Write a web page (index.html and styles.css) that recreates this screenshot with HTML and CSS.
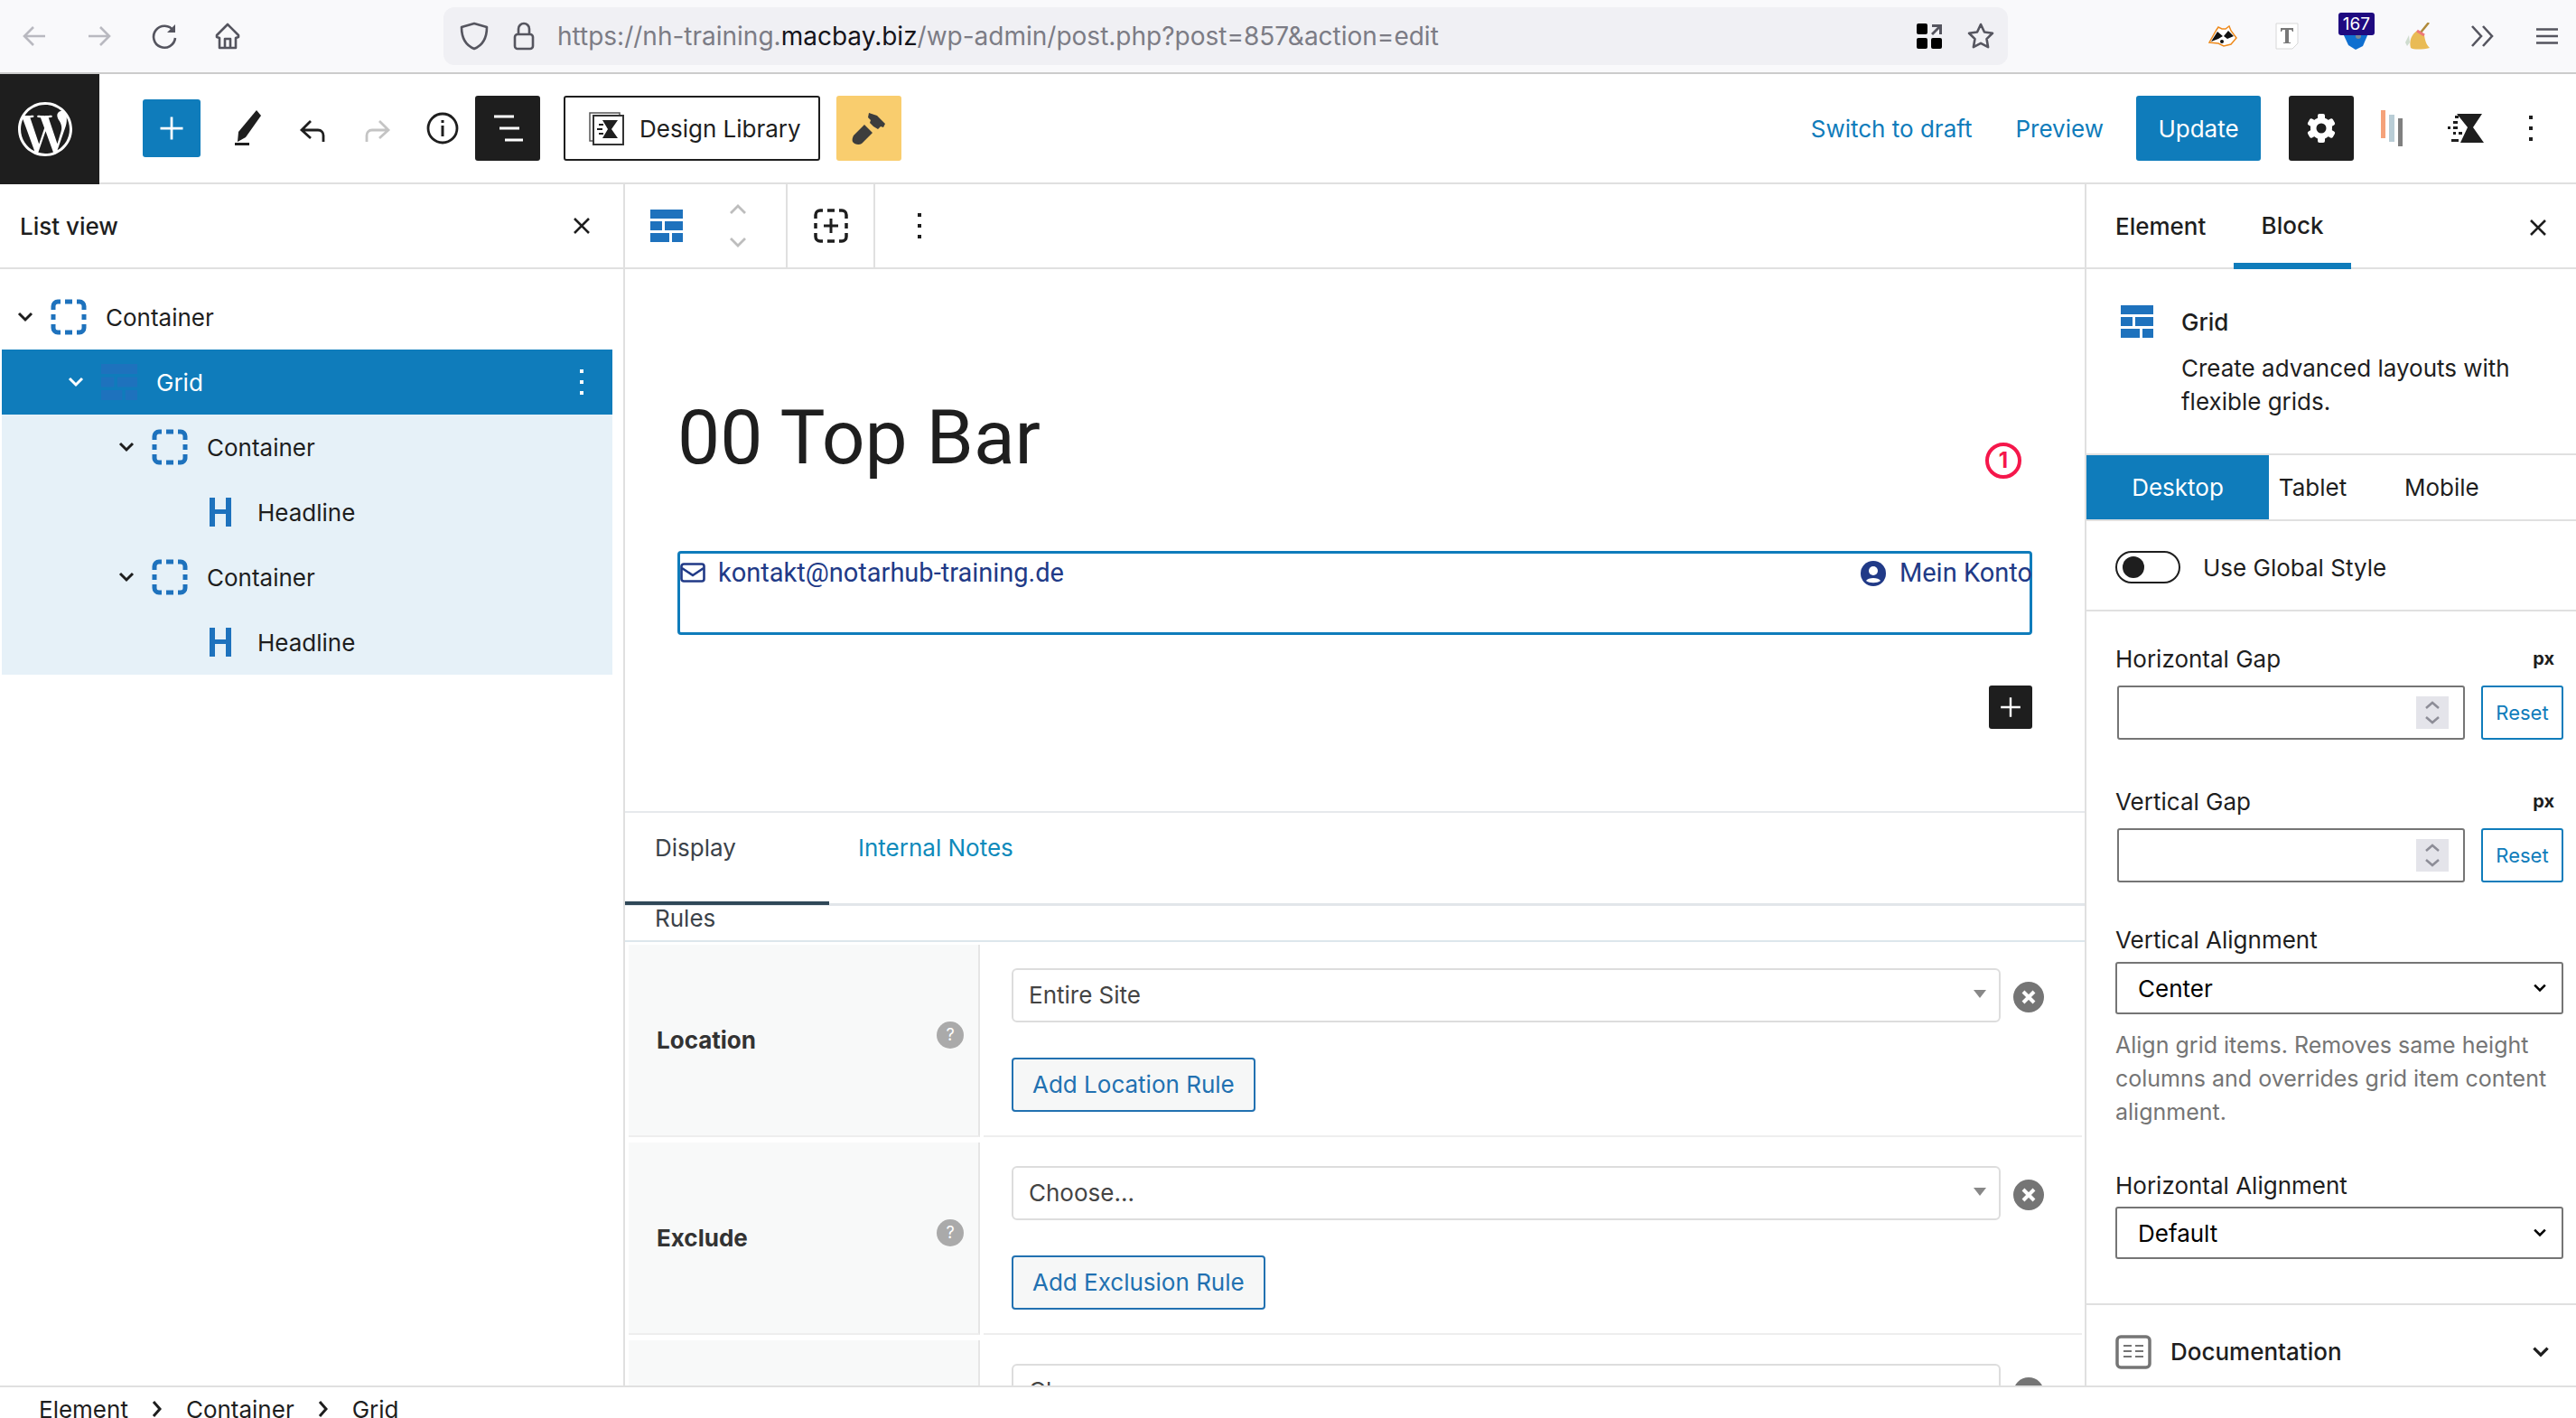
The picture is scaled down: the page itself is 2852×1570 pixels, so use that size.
FILE: index.html
```html
<!DOCTYPE html>
<html>
<head>
<meta charset="utf-8">
<title>00 Top Bar - Edit Element</title>
<link rel="stylesheet" href="styles.css">
</head>
<body>
<svg class="defs" width="0" height="0">
    <symbol id="i-dashed" viewBox="0 0 40 40"><path d="M3 12V8a5 5 0 0 1 5-5h3M29 3h3a5 5 0 0 1 5 5v4M37 28v4a5 5 0 0 1-5 5h-3M11 37H8a5 5 0 0 1-5-5v-4M16 3h8M16 37h8M3 17v6M37 17v6" fill="none" stroke="#1e72bd" stroke-width="5"/></symbol>
    <symbol id="i-grid" viewBox="0 0 36 36"><path d="M0 0h36v10H0zM0 13h13v10H0zM16 13h20v10H16zM0 26h21v10H0zM24 26h12v10H24z" fill="#1e72bd"/></symbol>
    <symbol id="i-h" viewBox="0 0 40 40"><path d="M8 4h6v13h12V4h6v32h-6V22H14v14H8z" fill="#1e72bd"/></symbol>
    <symbol id="i-chev" viewBox="0 0 24 24"><path d="M5 8l7 7 7-7" fill="none" stroke="currentColor" stroke-width="3"/></symbol>
    <symbol id="i-close" viewBox="0 0 24 24"><path d="M4 4l16 16M20 4L4 20" fill="none" stroke="#1e1e1e" stroke-width="2.6"/></symbol>
    <symbol id="i-dots" viewBox="0 0 8 32"><path d="M2 2h4v4H2zM2 14h4v4H2zM2 26h4v4H2z" fill="currentColor"/></symbol>
    <symbol id="i-spin" viewBox="0 0 36 36"><rect width="36" height="36" fill="#e4e4ea"/><path d="M11 13l7-6 7 6M11 23l7 6 7-6" fill="none" stroke="#8d8d97" stroke-width="2.5"/></symbol>
    <symbol id="i-x" viewBox="0 0 34 34"><circle cx="17" cy="17" r="17" fill="#757575"/><path d="M11 11l12 12M23 11L11 23" stroke="#fff" stroke-width="4"/></symbol>
    <symbol id="i-help" viewBox="0 0 30 30"><circle cx="15" cy="15" r="15" fill="#aaa"/></symbol>
</svg>

<div class="browser">
    <svg class="b-icon" viewBox="0 0 32 32"><path d="M28 16H6M15 6L5 16l10 10" fill="none" stroke="#b9b9c0" stroke-width="2.6"/></svg>
    <svg class="b-icon forward" viewBox="0 0 32 32"><path d="M4 16h22M17 6l10 10-10 10" fill="none" stroke="#b9b9c0" stroke-width="2.6"/></svg>
    <svg class="b-icon reload" viewBox="0 0 32 32"><path d="M26 10a12 12 0 1 0 2 8" fill="none" stroke="#55555f" stroke-width="2.6"/><path d="M28 3v9h-9z" fill="#55555f"/></svg>
    <svg class="b-icon home" viewBox="0 0 32 32"><path d="M16 3L4 15v2l3 1v11h18V18l3-1v-2zM13 29V19h6v10" fill="none" stroke="#55555f" stroke-width="2.6" stroke-linejoin="round"/></svg>
    <div class="address">
        <svg class="shield" viewBox="0 0 32 32"><path d="M16 2l14 4c0 12-4 20-14 24C6 26 2 18 2 6z" fill="none" stroke="#55555f" stroke-width="2.6" stroke-linejoin="round"/></svg>
        <svg class="lock" viewBox="0 0 24 32"><path d="M6 14V8a6 6 0 0 1 12 0v6" fill="none" stroke="#55555f" stroke-width="2.6"/><rect x="2" y="14" width="20" height="16" rx="3" fill="none" stroke="#55555f" stroke-width="2.6"/></svg>
        <div class="url">https://nh-training.<b>macbay.biz</b>/wp-admin/post.php?post=857&amp;action=edit</div>
        <svg class="qr" viewBox="0 0 30 30"><rect x="1" y="1" width="12" height="12" rx="2"/><rect x="1" y="17" width="12" height="12" rx="2"/><rect x="17" y="17" width="12" height="12" rx="2"/><path d="M18 2h11v11h-3V7l-7 7-2-2 7-7h-6z" fill="#55555f"/></svg>
        <svg class="star" viewBox="0 0 32 32"><path d="M16 3l4 8.500 9 1.300-6.500 6.300 1.600 9.100L16 23.900 7.900 28.200l1.600-9.100L3 12.800l9-1.300z" fill="none" stroke="#55555f" stroke-width="2.6" stroke-linejoin="round"/></svg>
    </div>
    <svg class="ext badger" viewBox="0 0 32 24"><path d="M1 19L9 5l2-3 4 2h4l4-3 2 5 6 8-6 7-8 2-6-3z" fill="#fff" stroke="#ee8a1c" stroke-width="1.500"/><path d="M3 18L10 7l6 5-5 3zM28 12l-6-6-5 6 4 3z" fill="#111"/><circle cx="15" cy="18" r="2" fill="#111"/></svg>
    <svg class="ext tdoc" viewBox="0 0 26 30"><path d="M1 1h24v22l-6 6H1z" fill="#fff" stroke="#d8d8d8"/><path d="M6 6h14v4h-1l-1-2h-3v14h2v1H9v-1h2V8H8l-1 2H6z" fill="#777"/></svg>
    <div class="ext-count">
        <svg class="ext-drop" viewBox="0 0 30 22"><path d="M1 3h28l-6 14-8 4-8-5z" fill="#0f6fd0"/><circle cx="18" cy="6" r="3" fill="#7b8794"/></svg>
        <span class="badge">167</span>
    </div>
    <svg class="ext broom" viewBox="0 0 30 30"><path d="M28 0l-9 11" stroke="#b08a3a" stroke-width="2.500"/><path d="M15 9l8 5c1 6 2 10 6 14-8 2-18 2-21 0-2-8 1-15 7-19z" fill="#e9bb55"/><path d="M15 9l8 5" stroke="#e77" stroke-width="3"/><path d="M2 22l4-8 1 8-3 4z" fill="#cfdccf"/></svg>
    <svg class="b-icon more" viewBox="0 0 26 24"><path d="M2 1l10 11L2 23M14 1l10 11-10 11" fill="none" stroke="#55555f" stroke-width="2.600"/></svg>
    <svg class="b-icon menu" viewBox="0 0 24 18"><path d="M0 1.500h24M0 9h24M0 16.500h24" stroke="#55555f" stroke-width="2.600"/></svg>
</div>

<header class="topbar">
    <div class="wp-logo">
        <svg viewBox="0 0 24 24"><path fill="#fff" d="M21.469 6.825c.84 1.537 1.318 3.3 1.318 5.175 0 3.979-2.156 7.456-5.363 9.325l3.295-9.527c.615-1.54.82-2.771.82-3.864 0-.405-.026-.78-.07-1.11m-7.981.105c.647-.03 1.232-.105 1.232-.105.582-.075.514-.93-.067-.899 0 0-1.755.135-2.88.135-1.064 0-2.85-.15-2.85-.15-.585-.03-.661.855-.075.885 0 0 .54.061 1.125.09l1.68 4.605-2.37 7.08L5.354 6.9c.649-.03 1.234-.1 1.234-.1.585-.075.516-.93-.065-.896 0 0-1.746.138-2.874.138-.2 0-.438-.008-.69-.015C4.911 3.15 8.235 1.215 12 1.215c2.809 0 5.365 1.072 7.286 2.833-.046-.003-.091-.009-.141-.009-1.06 0-1.812.923-1.812 1.914 0 .89.513 1.643 1.06 2.531.411.72.89 1.643.89 2.977 0 .915-.354 1.994-.821 3.479l-1.075 3.585-3.9-11.61.001.014zM12 22.784c-1.059 0-2.081-.153-3.048-.437l3.237-9.406 3.315 9.087c.024.053.05.101.078.149-1.12.393-2.325.609-3.582.609M1.211 12c0-1.564.336-3.05.935-4.39L7.29 21.709C3.694 19.96 1.212 16.271 1.211 12M12 0C5.385 0 0 5.385 0 12s5.385 12 12 12 12-5.385 12-12S18.615 0 12 0"/></svg>
    </div>
    <div class="btn-add"><svg viewBox="0 0 24 24"><path d="M12 2v20M2 12h20" stroke="#fff" stroke-width="2.200"/></svg></div>
    <svg class="tool pencil" viewBox="0 0 32 40"><path d="M26 0l5 6-17 24-9 5 1-11z" fill="#1e1e1e"/><path d="M2 36h16v3H2z" fill="#1e1e1e"/></svg>
    <svg class="tool undo" viewBox="0 0 32 32"><path d="M14 5L4 15l10 9M4 15h18c4 0 6 3 6 6v7" fill="none" stroke="#1e1e1e" stroke-width="2.800"/></svg>
    <svg class="tool redo" viewBox="0 0 32 32"><path d="M18 5l10 10-10 9M28 15H10c-4 0-6 3-6 6v7" fill="none" stroke="#c4c4c4" stroke-width="2.800"/></svg>
    <svg class="tool info" viewBox="0 0 36 36"><circle cx="18" cy="18" r="16" fill="none" stroke="#1e1e1e" stroke-width="2.800"/><path d="M16.500 15h3v12h-3zM16.500 9h3v3h-3z" fill="#1e1e1e"/></svg>
    <div class="btn-dark list-toggle"><svg viewBox="0 0 36 32"><path d="M4 3h22M10 16h22M16 29h20" stroke="#fff" stroke-width="3" transform="translate(-1 0)"/></svg></div>
    <div class="btn-library">
        <svg viewBox="0 0 40 40"><path d="M1 3h33v3H5v28H1z" fill="none" stroke="#555" stroke-width="1.500"/><rect x="5" y="6" width="33" height="32" fill="#fff" stroke="#333" stroke-width="2"/><path d="M15 11h17l-7 10 7 10H15l6-10z" fill="#1e1e1e"/><path d="M11 15h5v2h-5zM9 20h6v2H9zM11 25h5v2h-5z" fill="#1e1e1e"/></svg>
        <span>Design Library</span>
    </div>
    <div class="btn-brush"><svg viewBox="0 0 38 38"><path d="M19 2l9 3 9 9-2 4-3-1-3 3-5-3-4-4 1-3-3-3 1-5zM14 15l9 9-12 12c-3 2-8 1-10-2-1-2 0-5 1-7z" fill="#3d3d3d"/></svg></div>
    <div class="top-right">
        <a class="link switch">Switch to draft</a>
        <a class="link preview">Preview</a>
        <div class="btn-update">Update</div>
        <div class="btn-dark gear">
            <svg viewBox="0 0 32 32"><g fill="#fff"><rect x="12" y="0" width="8" height="32" rx="2"/><rect x="12" y="0" width="8" height="32" rx="2" transform="rotate(60 16 16)"/><rect x="12" y="0" width="8" height="32" rx="2" transform="rotate(120 16 16)"/><circle cx="16" cy="16" r="12"/></g><circle cx="16" cy="16" r="5.500" fill="#1e1e1e"/></svg>
        </div>
        <svg class="bars" viewBox="0 0 26 40"><path d="M0 0h5v31H0z" fill="#f5a27a"/><path d="M9 5h6v30H9z" fill="#b9cdd6"/><path d="M19 9h5v31h-5z" fill="#808080"/></svg>
        <svg class="gb" viewBox="0 0 40 32"><path d="M10 0h28l-10 15 12 17H14l8-17z" fill="#1e1e1e"/><path d="M8 2h4v3H8zM6 8h5v3H6zM0 14h3v3H0zM6 14h5v3H6zM12 20h4v3h-4zM6 20h3v3H6zM4 28h8v3H4z" fill="#1e1e1e"/></svg>
        <svg class="dots" viewBox="0 0 8 32"><use href="#i-dots"/></svg>
    </div>
</header>

<div class="editor">
    <aside class="listview">
        <div class="panel-head">
            <span class="panel-title">List view</span>
            <svg class="close" viewBox="0 0 24 24"><use href="#i-close"/></svg>
        </div>
        <ul class="tree">
            <li class="row lvl0"><svg class="chev" viewBox="0 0 24 24"><use href="#i-chev"/></svg><svg class="ico" viewBox="0 0 40 40"><use href="#i-dashed"/></svg><span>Container</span></li>
            <li class="row lvl1 active"><svg class="chev" viewBox="0 0 24 24"><use href="#i-chev"/></svg><svg class="ico" viewBox="0 0 40 40"><rect x="2" width="36" height="40" fill="none"/><svg x="0" y="0" width="40" height="40" viewBox="0 0 36 36"><use href="#i-grid"/></svg></svg><span>Grid</span><svg class="row-dots" viewBox="0 0 8 32"><use href="#i-dots"/></svg></li>
            <li class="row lvl2 tint"><svg class="chev" viewBox="0 0 24 24"><use href="#i-chev"/></svg><svg class="ico" viewBox="0 0 40 40"><use href="#i-dashed"/></svg><span>Container</span></li>
            <li class="row lvl3 tint"><svg class="ico" viewBox="0 0 40 40"><use href="#i-h"/></svg><span>Headline</span></li>
            <li class="row lvl2 tint"><svg class="chev" viewBox="0 0 24 24"><use href="#i-chev"/></svg><svg class="ico" viewBox="0 0 40 40"><use href="#i-dashed"/></svg><span>Container</span></li>
            <li class="row lvl3 tint"><svg class="ico" viewBox="0 0 40 40"><use href="#i-h"/></svg><span>Headline</span></li>
        </ul>
    </aside>

    <main class="main">
        <div class="block-toolbar">
            <div class="tb-group tb-first">
                <svg class="tb-grid" viewBox="0 0 36 36"><use href="#i-grid"/></svg>
                <svg class="tb-mover" viewBox="0 0 22 52"><path d="M3 12l8-8 8 8M3 40l8 8 8-8" fill="none" stroke="#bdbdbd" stroke-width="2.800"/></svg>
            </div>
            <div class="tb-group tb-second">
                <svg class="tb-add" viewBox="0 0 40 40"><path d="M3 12V8a5 5 0 0 1 5-5h3M29 3h3a5 5 0 0 1 5 5v4M37 28v4a5 5 0 0 1-5 5h-3M11 37H8a5 5 0 0 1-5-5v-4M16 3h8M16 37h8M3 17v6M37 17v6" fill="none" stroke="#1e1e1e" stroke-width="3.500"/><path d="M20 12v16M12 20h16" stroke="#1e1e1e" stroke-width="3"/></svg>
            </div>
            <div class="tb-group tb-third"><svg class="dots" viewBox="0 0 8 32"><use href="#i-dots"/></svg></div>
        </div>

        <div class="canvas">
            <h1 class="post-title">00 Top Bar</h1>
            <div class="notice">1</div>
            <div class="top-block">
                <div class="top-left">
                    <svg class="mail" viewBox="0 0 28 24"><rect x="1.500" y="2.500" width="25" height="19" rx="2.500" fill="none" stroke="#213a87" stroke-width="2.600"/><path d="M2 7l12 8 12-8" fill="none" stroke="#213a87" stroke-width="2.600"/></svg>
                    <span>kontakt@notarhub-training.de</span>
                </div>
                <div class="top-acct">
                    <svg class="user" viewBox="0 0 28 28"><circle cx="14" cy="14" r="14" fill="#213a87"/><circle cx="14" cy="11" r="5" fill="#fff"/><path d="M6 22c2-4 14-4 16 0-4 3-12 3-16 0z" fill="#fff"/></svg>
                    <span>Mein Konto</span>
                </div>
            </div>
            <div class="add-row"><div class="btn-append"><svg viewBox="0 0 24 24"><path d="M12 2v20M2 12h20" stroke="#fff" stroke-width="2.200"/></svg></div></div>
        </div>

        <div class="meta-tabs">
            <div class="meta-tab current">Display Rules</div>
            <div class="meta-tab">Internal Notes</div>
        </div>

        <div class="rules">
            <div class="rule">
                <div class="rule-label"><span>Location</span><span class="help">?</span></div>
                <div class="rule-body">
                    <div class="rule-select-row">
                        <div class="rule-select">Entire Site<i class="tri"></i></div>
                        <svg class="rule-x" viewBox="0 0 34 34"><use href="#i-x"/></svg>
                    </div>
                    <div class="btn-rule">Add Location Rule</div>
                </div>
            </div>
            <div class="rule">
                <div class="rule-label"><span>Exclude</span><span class="help">?</span></div>
                <div class="rule-body">
                    <div class="rule-select-row">
                        <div class="rule-select">Choose...<i class="tri"></i></div>
                        <svg class="rule-x" viewBox="0 0 34 34"><use href="#i-x"/></svg>
                    </div>
                    <div class="btn-rule">Add Exclusion Rule</div>
                </div>
            </div>
            <div class="rule">
                <div class="rule-label"></div>
                <div class="rule-body">
                    <div class="rule-select-row">
                        <div class="rule-select">Choose...<i class="tri"></i></div>
                        <svg class="rule-x" viewBox="0 0 34 34"><use href="#i-x"/></svg>
                    </div>
                </div>
            </div>
        </div>
    </main>

    <aside class="sidebar">
        <div class="side-tabs">
            <span class="side-tab">Element</span>
            <span class="side-tab selected">Block</span>
            <svg class="close" viewBox="0 0 24 24"><use href="#i-close"/></svg>
        </div>
        <div class="block-info">
            <svg class="info-icon" viewBox="0 0 36 36"><use href="#i-grid"/></svg>
            <div>
                <div class="info-name">Grid</div>
                <div class="info-desc">Create advanced layouts with flexible grids.</div>
            </div>
        </div>
        <div class="devices">
            <div class="device on">Desktop</div>
            <div class="device tablet">Tablet</div>
            <div class="device mobile">Mobile</div>
        </div>
        <div class="global">
            <span class="toggle"><i></i></span>
            <span>Use Global Style</span>
        </div>
        <div class="settings">
            <div class="field-head"><span>Horizontal Gap</span><b>px</b></div>
            <div class="field-row">
                <div class="num-input"><svg viewBox="0 0 36 36"><use href="#i-spin"/></svg></div>
                <div class="btn-reset">Reset</div>
            </div>
            <div class="field-head"><span>Vertical Gap</span><b>px</b></div>
            <div class="field-row">
                <div class="num-input"><svg viewBox="0 0 36 36"><use href="#i-spin"/></svg></div>
                <div class="btn-reset">Reset</div>
            </div>
            <div class="sel-label">Vertical Alignment</div>
            <div class="side-select">Center<svg viewBox="0 0 24 24"><use href="#i-chev"/></svg></div>
            <p class="help-text">Align grid items. Removes same height columns and overrides grid item content alignment.</p>
            <div class="sel-label second">Horizontal Alignment</div>
            <div class="side-select">Default<svg viewBox="0 0 24 24"><use href="#i-chev"/></svg></div>
        </div>
        <div class="docs">
            <svg class="docs-icon" viewBox="0 0 40 38"><rect x="2" y="2" width="36" height="34" rx="4" fill="none" stroke="#757575" stroke-width="3.500"/><path d="M9 12h9M22 12h9M9 18h9M22 18h9M9 24h9M22 24h9" stroke="#757575" stroke-width="2"/></svg>
            <span>Documentation</span>
            <svg class="docs-chev" viewBox="0 0 24 24"><use href="#i-chev"/></svg>
        </div>
    </aside>
</div>

<footer class="crumbs">
    <span>Element</span><svg viewBox="0 0 12 20"><path d="M2 2l7 8-7 8" fill="none" stroke="#1e1e1e" stroke-width="3"/></svg>
    <span>Container</span><svg viewBox="0 0 12 20"><path d="M2 2l7 8-7 8" fill="none" stroke="#1e1e1e" stroke-width="3"/></svg>
    <span>Grid</span>
</footer>
</body>
</html>
```

FILE: styles.css
```css
*{
    box-sizing: border-box;
}
html,body{
    margin:0;
    height:1570px;
    overflow:hidden;
}
body{
    background:#fff;
    color:#1e1e1e;
    font-family:'Inter','Liberation Sans',sans-serif;
    font-size:26px;
}
.defs{
    position:absolute;
}

/* browser chrome */
.browser{
    display:flex;
    align-items:center;
    height:82px;
    background:#f9f9fb;
    border-bottom:2px solid #ccc;
}
.b-icon{
    width:32px;
    height:32px;
    flex:none;
    margin-left:22px;
}
.forward{
    margin-left:40px;
}
.reload{
    margin-left:40px;
}
.home{
    margin-left:38px;
}
.address{
    display:flex;
    align-items:center;
    width:1732px;
    height:64px;
    margin-left:223px;
    padding-left:18px;
    background:#f0f0f4;
    border-radius:12px;
}
.shield{
    width:32px;
    height:32px;
}
.lock{
    width:24px;
    height:32px;
    margin-left:27px;
}
.url{
    flex:1;
    margin-left:25px;
    font-size:28px;
    color:#7c7c85;
    white-space:nowrap;
}
.url b{
    font-weight:400;
    color:#15141a;
}
.qr{
    width:30px;
    height:30px;
}
.star{
    width:32px;
    height:32px;
    margin:0 14px 0 26px;
}
.ext{
    flex:none;
}
.badger{
    width:32px;
    height:24px;
    margin-left:222px;
}
.tdoc{
    width:26px;
    height:30px;
    margin-left:42px;
}
.ext-count{
    position:relative;
    width:40px;
    height:42px;
    margin:0 0 0 44px;
    align-self:flex-start;
    margin-top:14px;
}
.ext-drop{
    position:absolute;
    left:4px;
    top:20px;
    width:30px;
    height:22px;
}
.badge{
    position:absolute;
    left:0;
    top:0;
    width:40px;
    height:25px;
    background:#1f0a80;
    border-radius:3px;
    color:#fff;
    font-size:19px;
    line-height:25px;
    text-align:center;
}
.broom{
    width:30px;
    height:30px;
    margin-left:32px;
}
.more{
    width:26px;
    height:24px;
    margin-left:44px;
}
.menu{
    width:24px;
    height:18px;
    margin-left:47px;
}

/* editor top bar */
.topbar{
    display:flex;
    align-items:center;
    height:122px;
    border-bottom:2px solid #e0e0e0;
}
.wp-logo{
    display:flex;
    align-items:center;
    justify-content:center;
    width:110px;
    height:122px;
    margin-bottom:-2px;
    padding-right:10px;
    background:#1e1e1e;
    flex:none;
}
.wp-logo svg{
    width:60px;
    height:60px;
}
.btn-add{
    display:flex;
    align-items:center;
    justify-content:center;
    width:64px;
    height:64px;
    margin-left:48px;
    background:#0f7cbb;
    border-radius:3px;
}
.btn-add svg{
    width:30px;
    height:30px;
}
.tool{
    flex:none;
}
.pencil{
    width:32px;
    height:40px;
    margin-left:36px;
}
.undo{
    width:32px;
    height:32px;
    margin:6px 0 0 40px;
}
.redo{
    width:32px;
    height:32px;
    margin:6px 0 0 40px;
}
.info{
    width:36px;
    height:36px;
    margin-left:38px;
}
.btn-dark{
    display:flex;
    align-items:center;
    justify-content:center;
    width:72px;
    height:72px;
    background:#1e1e1e;
    border-radius:3px;
}
.list-toggle{
    margin-left:18px;
}
.list-toggle svg{
    width:36px;
    height:32px;
}
.btn-library{
    display:flex;
    align-items:center;
    width:284px;
    height:72px;
    margin-left:26px;
    padding-left:26px;
    border:2px solid #1e1e1e;
    border-radius:3px;
}
.btn-library svg{
    width:40px;
    height:40px;
    margin-right:16px;
}
.btn-brush{
    display:flex;
    align-items:center;
    justify-content:center;
    width:72px;
    height:72px;
    margin-left:18px;
    background:#f9cd6e;
    border-radius:3px;
}
.btn-brush svg{
    width:38px;
    height:38px;
}
.top-right{
    display:flex;
    align-items:center;
    margin-left:auto;
}
.link{
    color:#0f7cbb;
}
.preview{
    margin-left:48px;
}
.btn-update{
    display:flex;
    align-items:center;
    justify-content:center;
    width:138px;
    height:72px;
    margin-left:36px;
    background:#0f7cbb;
    color:#fff;
    border-radius:3px;
}
.gear{
    margin-left:31px;
}
.gear svg{
    width:32px;
    height:32px;
}
.bars{
    width:26px;
    height:40px;
    margin-left:30px;
}
.gb{
    width:40px;
    height:32px;
    margin-left:48px;
}
.dots{
    width:8px;
    height:32px;
    margin:0 46px 0 48px;
    color:#1e1e1e;
}

/* main layout */
.editor{
    display:flex;
    height:1332px;
    border-bottom:2px solid #e0e0e0;
}
.listview{
    width:692px;
    flex:none;
    border-right:2px solid #e0e0e0;
}
.panel-head{
    display:flex;
    align-items:center;
    justify-content:space-between;
    height:94px;
    padding:0 34px 0 22px;
    border-bottom:2px solid #e0e0e0;
}
.panel-title{
    font-weight:500;
}
.close{
    width:24px;
    height:24px;
}
.tree{
    list-style:none;
    margin:17px 0 0 2px;
    padding:0;
    width:676px;
}
.row{
    display:flex;
    align-items:center;
    height:72px;
}
.chev{
    width:24px;
    height:24px;
    margin-right:16px;
    flex:none;
}
.ico{
    width:40px;
    height:40px;
    margin-right:21px;
    flex:none;
}
.lvl0{
    padding-left:14px;
}
.lvl1{
    padding-left:70px;
}
.lvl2{
    padding-left:126px;
}
.lvl3{
    padding-left:222px;
}
.active{
    background:#0f7cbb;
    color:#fff;
}
.tint{
    background:#e6f1f8;
}
.row-dots{
    width:8px;
    height:32px;
    margin-left:auto;
    margin-right:30px;
    color:#fff;
}

/* centre column */
.main{
    width:1616px;
    flex:none;
    overflow:hidden;
}
.block-toolbar{
    display:flex;
    align-items:center;
    height:94px;
    border-bottom:2px solid #e0e0e0;
}
.tb-group{
    display:flex;
    align-items:center;
    height:100%;
}
.tb-first{
    width:178px;
    padding-left:28px;
}
.tb-grid{
    width:36px;
    height:36px;
}
.tb-mover{
    width:22px;
    height:52px;
    margin-left:50px;
}
.tb-second{
    justify-content:center;
    width:99px;
    border-left:2px solid #e0e0e0;
    border-right:2px solid #e0e0e0;
}
.tb-add{
    width:40px;
    height:40px;
}
.tb-third .dots{
    margin:0 0 0 45px;
}
.canvas{
    position:relative;
    height:602px;
    padding:137px 58px 0 58px;
    border-bottom:2px solid #e6e9ec;
}
.post-title{
    margin:0;
    font-family:'Roboto','Inter',sans-serif;
    font-size:84px;
    font-weight:400;
    line-height:100px;
    color:#1e1e1e;
}
.notice{
    position:absolute;
    left:1506px;
    top:192px;
    width:40px;
    height:40px;
    border:4px solid #f5174b;
    border-radius:50%;
    color:#f5174b;
    font-size:24px;
    font-weight:700;
    line-height:32px;
    text-align:center;
}
.top-block{
    display:flex;
    justify-content:space-between;
    width:1500px;
    height:93px;
    margin-top:75px;
    border:3px solid #0f7cbb;
    border-radius:4px;
    color:#213a87;
    font-family:'Roboto','Inter',sans-serif;
    font-size:29px;
    line-height:36px;
    padding-top:3px;
}
.top-left,.top-acct{
    display:flex;
    align-items:flex-start;
}
.top-acct{
    margin-right:-3px;
}
.mail{
    width:28px;
    height:24px;
    margin:6px 14px 0 0;
}
.user{
    width:28px;
    height:28px;
    margin:5px 15px 0 0;
}
.add-row{
    display:flex;
    justify-content:flex-end;
    width:1500px;
    margin-top:56px;
}
.btn-append{
    display:flex;
    align-items:center;
    justify-content:center;
    width:48px;
    height:48px;
    background:#1e1e1e;
    border-radius:3px;
}
.btn-append svg{
    width:26px;
    height:26px;
}
.meta-tabs{
    display:flex;
    height:103px;
    border-bottom:3px solid #e2e6ea;
}
.meta-tab{
    height:102px;
    padding:0 32px;
    line-height:78px;
    color:#0e8abb;
}
.meta-tab.current{
    width:226px;
    padding:0 33px;
    color:#3c434a;
    border-bottom:4px solid #2f4858;
}
.rules{
    margin-top:38px;
    padding-top:3px;
    border-top:2px solid #dde6ec;
}
.rule{
    display:flex;
    height:213px;
    margin:0 3px 6px 4px;
}
.rule-label{
    display:flex;
    align-items:center;
    justify-content:space-between;
    width:389px;
    padding:0 16px 0 31px;
    background:#f8f9f9;
    border-right:2px solid #e6e6e6;
    border-bottom:2px solid #eee;
    color:#333;
    font-weight:700;
}
.help{
    width:30px;
    height:30px;
    margin-bottom:12px;
    background:#aaa;
    border-radius:50%;
    color:#fff;
    font-size:18px;
    font-weight:400;
    line-height:30px;
    text-align:center;
}
.rule-body{
    flex:1;
    margin-left:4px;
    padding:26px 0 0 31px;
    border-bottom:2px solid #eee;
}
.rule-select-row{
    display:flex;
    align-items:center;
}
.rule-select{
    position:relative;
    width:1095px;
    height:60px;
    padding-left:17px;
    border:2px solid #ddd;
    border-radius:6px;
    color:#444;
    line-height:56px;
}
.tri{
    position:absolute;
    right:14px;
    top:22px;
    border-top:9px solid #888;
    border-left:7px solid transparent;
    border-right:7px solid transparent;
}
.rule-x{
    width:34px;
    height:34px;
    margin:4px 0 0 14px;
}
.btn-rule{
    display:inline-block;
    height:60px;
    margin-top:39px;
    padding:0 21px;
    background:#f6f7f7;
    border:2px solid #2271b1;
    border-radius:4px;
    color:#2271b1;
    line-height:56px;
}

/* right sidebar */
.sidebar{
    width:544px;
    flex:none;
    border-left:2px solid #e0e0e0;
}
.side-tabs{
    position:relative;
    display:flex;
    align-items:center;
    height:94px;
    padding-left:32px;
    border-bottom:2px solid #e0e0e0;
}
.side-tab{
    font-weight:500;
}
.side-tab.selected{
    position:absolute;
    left:163px;
    bottom:-2px;
    width:130px;
    height:94px;
    line-height:92px;
    text-align:center;
    border-bottom:7px solid #0f7cbb;
}
.side-tabs .close{
    position:absolute;
    right:30px;
    top:36px;
}
.block-info{
    display:flex;
    height:206px;
    padding:40px 14px 0 38px;
    border-bottom:2px solid #e0e0e0;
    line-height:37px;
}
.info-icon{
    width:36px;
    height:36px;
    margin-right:31px;
    flex:none;
}
.info-name{
    font-weight:500;
}
.info-desc{
    margin-top:14px;
}
.devices{
    display:flex;
    height:73px;
    border-bottom:2px solid #e0e0e0;
}
.device{
    width:202px;
    line-height:71px;
    text-align:center;
}
.device.on{
    background:#0f7cbb;
    color:#fff;
}
.device.tablet{
    width:97px;
    margin-left:0;
}
.device.mobile{
    width:auto;
    margin-left:53px;
}
.global{
    display:flex;
    align-items:center;
    height:100px;
    padding:4px 0 0 32px;
    border-bottom:2px solid #e0e0e0;
}
.toggle{
    display:flex;
    align-items:center;
    width:72px;
    height:36px;
    margin-right:25px;
    padding-left:6px;
    border:2px solid #1e1e1e;
    border-radius:18px;
}
.toggle i{
    width:24px;
    height:24px;
    background:#1e1e1e;
    border-radius:50%;
}
.settings{
    height:768px;
    padding:35px 14px 0 32px;
    border-bottom:2px solid #e0e0e0;
}
.field-head{
    display:flex;
    align-items:center;
    justify-content:space-between;
    height:34px;
    margin-bottom:13px;
    padding-right:10px;
}
.field-head b{
    font-size:20px;
}
.field-row{
    display:flex;
    justify-content:space-between;
    height:60px;
    margin-bottom:51px;
}
.num-input{
    display:flex;
    align-items:center;
    justify-content:flex-end;
    width:385px;
    margin-left:2px;
    padding-right:16px;
    border:2px solid #757575;
    border-radius:3px;
}
.num-input svg{
    width:36px;
    height:36px;
}
.btn-reset{
    width:91px;
    border:2px solid #0f7cbb;
    border-radius:3px;
    color:#0f7cbb;
    font-size:22px;
    line-height:56px;
    text-align:center;
}
.sel-label{
    height:34px;
    margin:-4px 0 7px;
    line-height:34px;
}
.sel-label.second{
    margin:46px 0 6px;
}
.side-select{
    display:flex;
    align-items:center;
    justify-content:space-between;
    height:58px;
    padding:0 14px 0 23px;
    border:2px solid #757575;
    border-radius:3px;
    color:#000;
}
.side-select svg{
    width:20px;
    height:20px;
}
.help-text{
    margin:16px 0 0;
    color:#757575;
    font-size:25px;
    line-height:37px;
}
.docs{
    display:flex;
    align-items:center;
    height:91px;
    padding:12px 0 0 32px;
    font-weight:500;
}
.docs-icon{
    width:40px;
    height:38px;
    margin-right:21px;
}
.docs-chev{
    width:26px;
    height:26px;
    margin-left:auto;
    margin-right:26px;
}

/* breadcrumb */
.crumbs{
    display:flex;
    align-items:center;
    height:34px;
    padding:14px 0 0 43px;
    white-space:nowrap;
}
.crumbs svg{
    width:12px;
    height:20px;
    margin:0 26px;
}
```
